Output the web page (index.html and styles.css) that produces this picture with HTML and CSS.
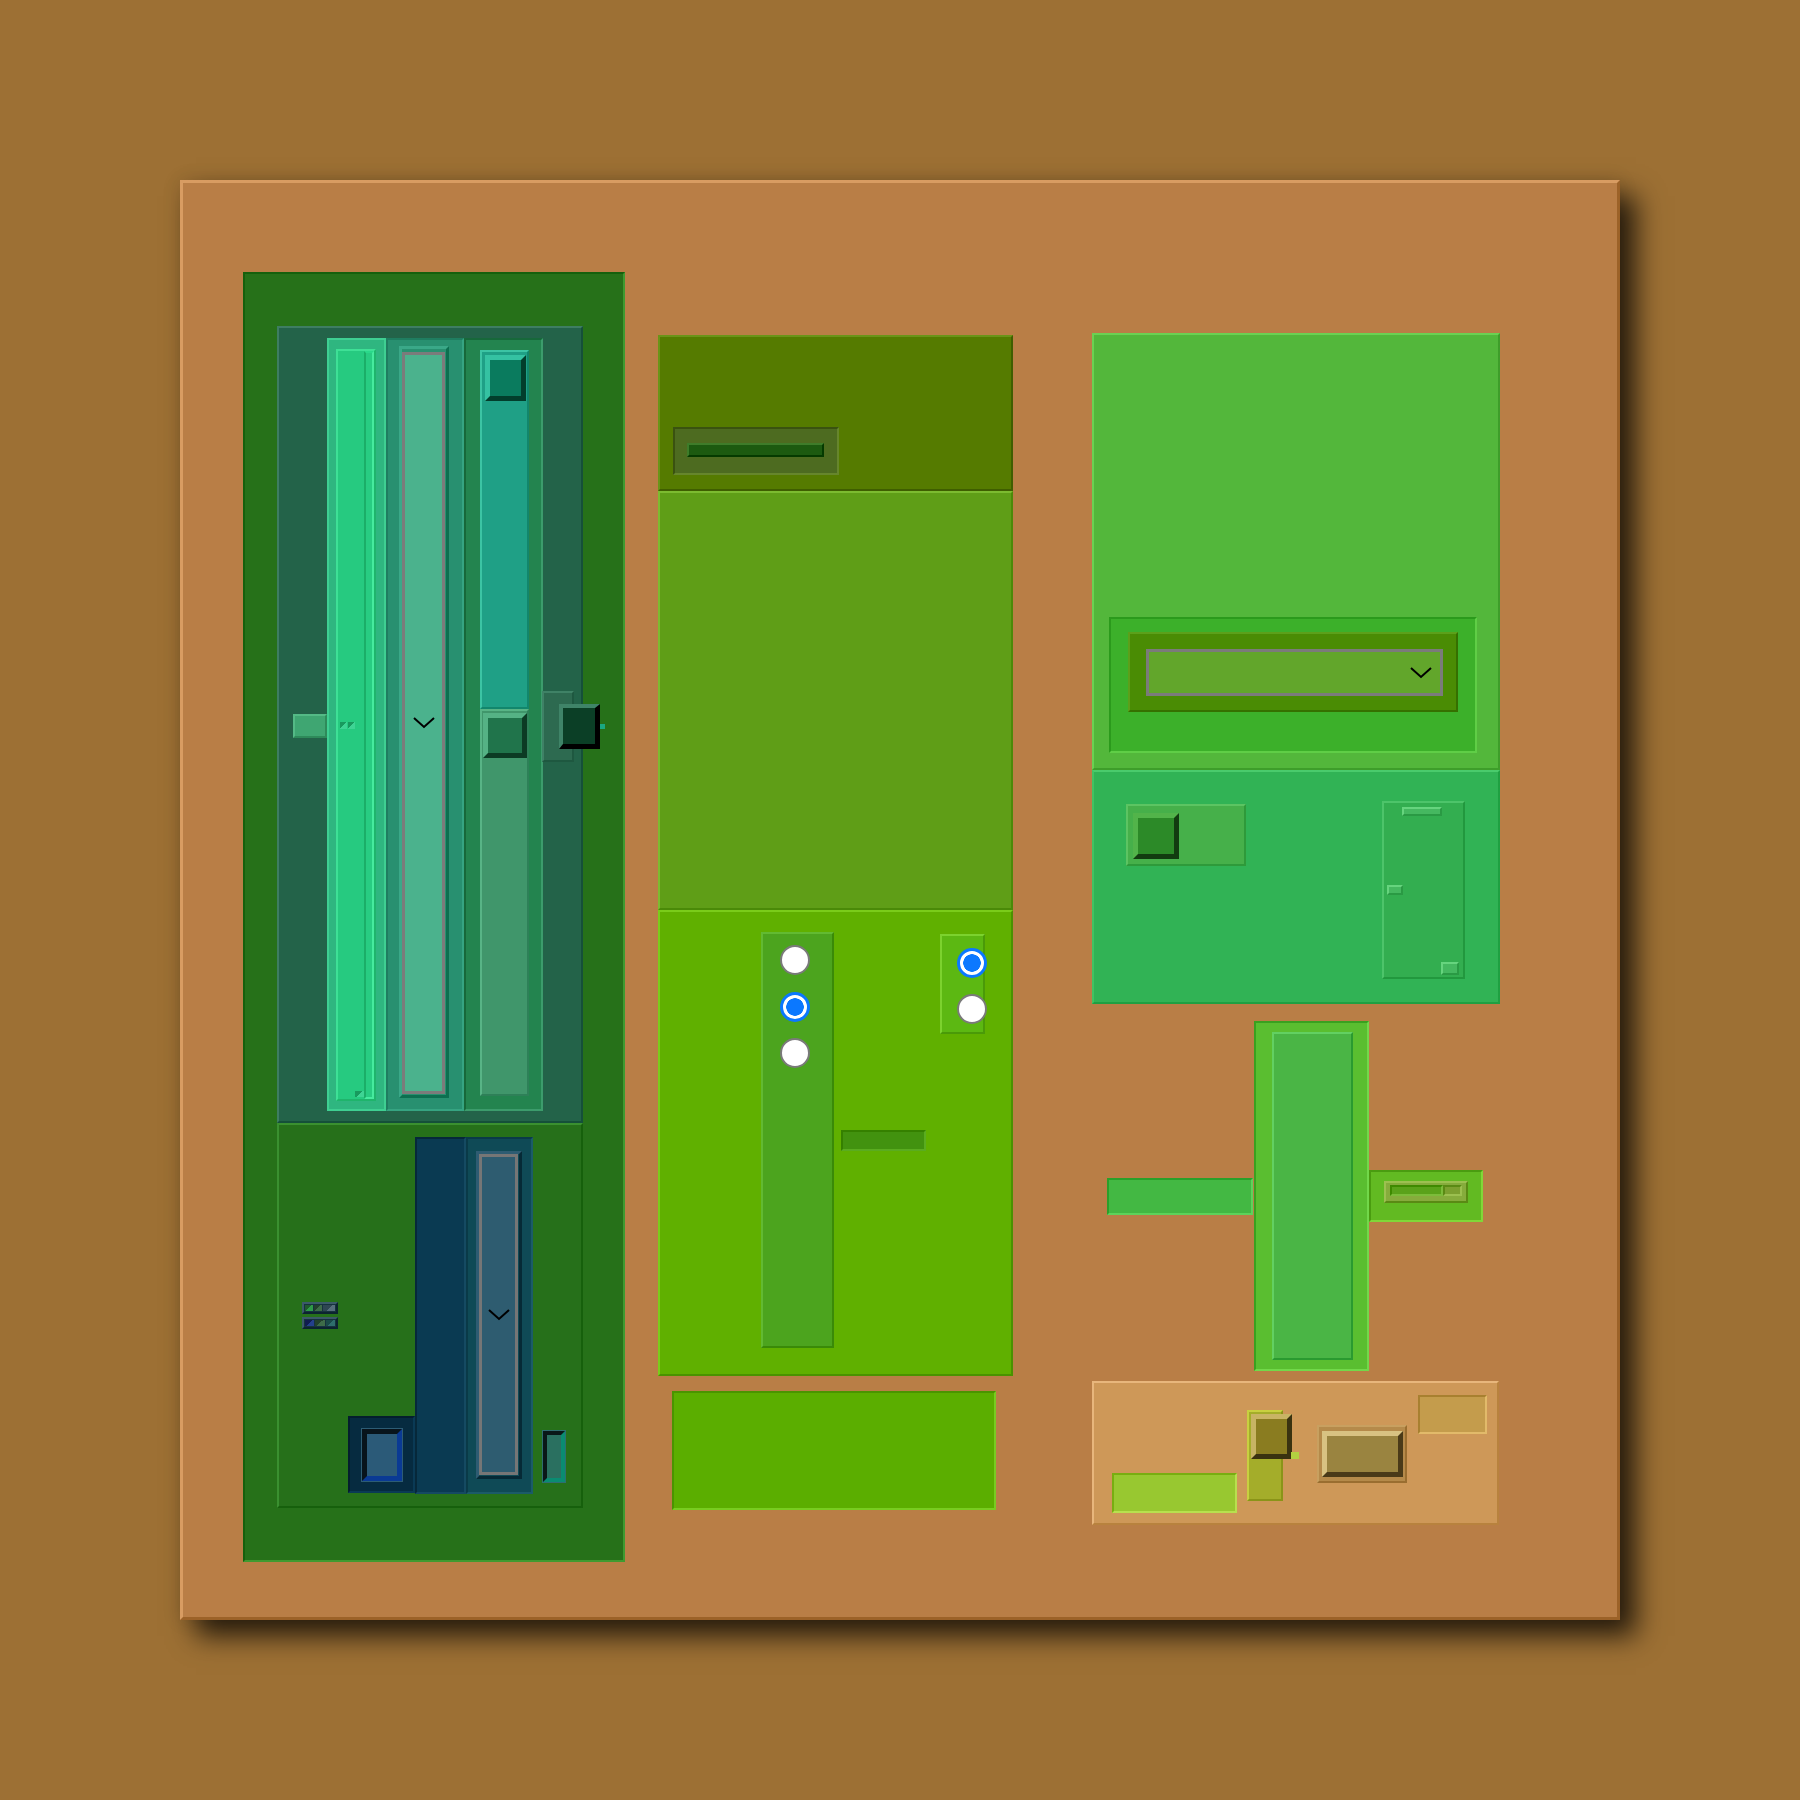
FILE: index.html
```html
<!DOCTYPE html>
<html>
<head>
<meta charset="utf-8">
<link rel="stylesheet" href="styles.css">
</head>
<body>
<div class="board">
  <div class="colA">
    <div class="teal">
      <div class="a-small"></div>
      <div class="c1">
        <div class="c1-inner">
          <div class="lane">
            <div class="lane-top"></div>
            <div class="ticks"><span class="tk1"></span><span class="tk1"></span></div>
            <div class="lane-bot"><span class="tk1 tk-end"></span></div>
          </div>
          <div class="strip"></div>
        </div>
      </div>
      <div class="c2">
        <div class="sel-out">
          <div class="sel-in">
            <svg class="chev" width="22" height="12" viewBox="0 0 22 12"><polyline points="1,1 11,10 21,1" fill="none" stroke="#000" stroke-width="2"/></svg>
          </div>
        </div>
      </div>
      <div class="c3">
        <div class="track">
          <div class="t-up"><div class="thumb1"></div></div>
          <div class="t-low"><div class="thumb2"></div></div>
        </div>
      </div>
      <div class="a-right">
        <div class="a-btn"></div>
        <div class="a-dot"></div>
      </div>
    </div>
    <div class="gpanel">
      <div class="tickbox">
        <div class="tk"><span class="sg sg-g"></span><span class="sg sg-o"></span><span class="sg sg-w sg-b"></span></div>
        <div class="tk"><span class="sg sg-n"></span><span class="sg sg-o"></span><span class="sg sg-t"></span></div>
      </div>
      <div class="sq"><div class="sq-btn"><div class="sq-bev"></div></div></div>
      <div class="navy"></div>
      <div class="ncol">
        <div class="nsel-out">
          <div class="nsel-in">
            <svg class="chev" width="22" height="12" viewBox="0 0 22 12"><polyline points="1,1 11,10 21,1" fill="none" stroke="#000" stroke-width="2"/></svg>
          </div>
        </div>
      </div>
      <div class="nsmall"><div class="nsmall-bev"></div></div>
    </div>
  </div>

  <div class="colB">
    <div class="b1">
      <div class="b1-box"><div class="b1-bar"></div></div>
    </div>
    <div class="b2"></div>
    <div class="b3">
      <div class="b3-radios">
        <input class="radio" type="radio" name="r1">
        <input class="radio" type="radio" name="r1" checked>
        <input class="radio" type="radio" name="r1">
      </div>
      <div class="b3-bar"></div>
      <div class="b3-box">
        <input class="radio" type="radio" name="r2" checked>
        <input class="radio" type="radio" name="r2">
      </div>
    </div>
    <div class="b4"></div>
  </div>

  <div class="colC">
    <div class="c-top">
      <div class="ct-in">
        <div class="ct-dark">
          <div class="ct-sel">
            <svg class="chev" width="22" height="12" viewBox="0 0 22 12"><polyline points="1,1 11,10 21,1" fill="none" stroke="#000" stroke-width="2"/></svg>
          </div>
        </div>
      </div>
    </div>
    <div class="c-low">
      <div class="toggle"><div class="knob"></div></div>
      <div class="lowbox">
        <div class="lb lb1"></div>
        <div class="lb lb2"></div>
        <div class="lb lb3"></div>
      </div>
    </div>
    <div class="c-mid">
      <div class="c-lbar"></div>
      <div class="c-tall"><div class="c-tall-in"></div></div>
      <div class="c-rbox">
        <div class="c-rbar"><div class="rt1"></div><div class="rt2"></div></div>
      </div>
    </div>
    <div class="c-tan">
      <div class="lime"></div>
      <div class="olive">
        <div class="olive-btn"></div>
        <div class="olive-tip"></div>
      </div>
      <div class="brown"><div class="brown-btn"></div></div>
      <div class="tanbox"></div>
    </div>
  </div>
</div>
</body>
</html>
```

FILE: styles.css
```css
* { box-sizing: border-box; margin: 0; padding: 0; }
html, body { width: 1800px; height: 1800px; }
body {
  background: #9d7034;
  font-family: "Liberation Sans", sans-serif;
  padding: 180px;
  overflow: hidden;
}
.board {
  width: 1440px;
  height: 1440px;
  background: #b97e46;
  border: 3px solid;
  border-color: #d89c62 #9c6228 #9c6228 #d89c62;
  box-shadow: 16px 16px 26px rgba(0, 0, 0, 0.75), 0 0 18px rgba(0, 0, 0, 0.12);
  display: flex;
  align-items: flex-start;
  padding-left: 60px;
}
.chev { display: block; }

/* ---------- Column A ---------- */
.colA {
  width: 382px;
  height: 1290px;
  margin-top: 89px;
  background: #267119;
  border: 2px solid;
  border-color: #15600c #3f9a30 #3f9a30 #15600c;
  padding: 52px 0 0 32px;
  flex-shrink: 0;
}
.teal {
  width: 306px;
  height: 797px;
  background: #236349;
  border: 2px solid;
  border-color: #3e7d62 #15503a #15503a #3e7d62;
  display: flex;
  align-items: center;
  padding-left: 14px;
}
.a-small {
  width: 34px;
  height: 24px;
  margin-top: 3px;
  background: #3fa672;
  border: 2px solid;
  border-color: #54ba86 #2e8a5a #2e8a5a #54ba86;
  flex-shrink: 0;
}
.c1 {
  width: 59px;
  height: 773px;
  background: #2fb680;
  border: 2px solid #3fcf92;
  padding: 9px 0 0 7px;
  flex-shrink: 0;
}
.c1-inner {
  width: 40px;
  height: 752px;
  background: #26ca80;
  border: 2px solid;
  border-color: #3ee096 #1fb46c #1fb46c #3ee096;
  display: flex;
}
.lane {
  flex: 1;
  display: grid;
  grid-template-rows: 1fr auto 1fr;
}
.ticks { display: flex; gap: 1px; margin-left: 2px; }
.tk1 {
  display: block;
  width: 7px;
  height: 7px;
  background: linear-gradient(135deg, #189a5e 50%, #3ed494 50%);
}
.lane-bot { display: flex; align-items: flex-end; justify-content: flex-end; padding-bottom: 2px; }
.tk-end { width: 9px; height: 6px; }
.strip {
  width: 10px;
  background: #28cc82;
  border: 2px solid;
  border-color: #2ad88a #46ea9e #46ea9e #1bae68;
}
.c2 {
  width: 78px;
  height: 773px;
  background: #289070;
  border: 2px solid;
  border-color: #1f7d60 #36a482 #36a482 #1f7d60;
  padding: 6px 0 0 11px;
  flex-shrink: 0;
}
.sel-out {
  width: 50px;
  height: 752px;
  border: 3px solid;
  border-color: #3aa888 #0c6f50 #0c6f50 #3aa888;
  padding-top: 3px;
}
.sel-in {
  width: 43px;
  height: 742px;
  border: 3px solid #7b7b7b;
  background: #4bb28d;
  display: flex;
  align-items: center;
  justify-content: center;
}
.c3 {
  width: 79px;
  height: 773px;
  background: #23844f;
  border: 2px solid;
  border-color: #17683a #3c9c6c #3c9c6c #17683a;
  padding: 10px 0 0 14px;
  flex-shrink: 0;
}
.track {
  width: 49px;
  height: 746px;
  display: flex;
  flex-direction: column;
}
.t-up {
  height: 359px;
  background: #1fa086;
  border: 2px solid;
  border-color: #3cc4a4 #12866c #12866c #3cc4a4;
  padding: 3px 0 0 3px;
}
.thumb1 {
  width: 41px;
  height: 46px;
  background: #0a7b5e;
  border: 5px solid;
  border-color: #35c2a2 #023e2c #023e2c #35c2a2;
}
.t-low {
  flex: 1;
  background: #40966b;
  border: 2px solid;
  border-color: #58b486 #2e8058 #2e8058 #58b486;
  padding: 2px 0 0 1px;
}
.thumb2 {
  width: 44px;
  height: 45px;
  background: #20744b;
  border: 5px solid;
  border-color: #55b285 #0c3b24 #0c3b24 #55b285;
}
.a-right {
  width: 32px;
  height: 71px;
  margin: 4px 0 0 -1px;
  background: #2d6a50;
  border: 2px solid;
  border-color: #3f8266 #1e5840 #1e5840 #3f8266;
  position: relative;
  flex-shrink: 0;
}
.a-btn {
  position: absolute;
  left: 15px;
  top: 11px;
  width: 41px;
  height: 45px;
  background: #0b3f26;
  border-style: solid;
  border-width: 4px 5px 5px 4px;
  border-color: #3f8468 #000 #000 #3f8468;
}
.a-dot {
  position: absolute;
  left: 56px;
  top: 31px;
  width: 5px;
  height: 5px;
  background: #1aa882;
}

.gpanel {
  width: 306px;
  height: 385px;
  background: #26701a;
  border: 2px solid;
  border-color: #3a9030 #16600c #16600c #3a9030;
  display: flex;
  align-items: center;
  padding-left: 23px;
}
.tickbox { display: flex; flex-direction: column; gap: 3px; width: 36px; flex-shrink: 0; }
.tk {
  height: 12px;
  background: #16323e;
  border: 2px solid;
  border-color: #3b5a68 #0c2430 #0c2430 #3b5a68;
  display: flex;
  gap: 1px;
  padding: 1px;
}
.sg { display: block; flex: 1; }
.sg-w { flex: 1.6; }
.sg-g { background: linear-gradient(135deg, #1f5a2c 50%, #2e9a48 50%); }
.sg-o { background: linear-gradient(135deg, #22402c 50%, #3e6c48 50%); }
.sg-b { background: linear-gradient(135deg, #2e4652 50%, #566e7c 50%); }
.sg-n { background: linear-gradient(135deg, #101c50 50%, #24408c 50%); }
.sg-t { background: linear-gradient(135deg, #1a4a48 50%, #2e6e6c 50%); }
.sq {
  align-self: flex-end;
  margin: 0 0 13px 10px;
  width: 67px;
  height: 77px;
  background: #062b40;
  border: 2px solid;
  border-color: #041e2e #0a3a55 #0a3a55 #041e2e;
  display: flex;
  align-items: center;
  justify-content: center;
  flex-shrink: 0;
}
.sq-btn {
  width: 42px;
  height: 54px;
  border: 1px solid #2d5c74;
}
.sq-bev {
  width: 100%;
  height: 100%;
  background: #2b5a78;
  border: 5px solid;
  border-color: #08141c #0a3a94 #0a3a94 #08141c;
}
.navy {
  width: 51px;
  height: 357px;
  background: #0a3a52;
  border: 2px solid;
  border-color: #06283a #154a62 #154a62 #06283a;
  flex-shrink: 0;
}
.ncol {
  width: 67px;
  height: 357px;
  background: #0f4a56;
  border: 2px solid;
  border-color: #0a3a48 #1b5b68 #1b5b68 #0a3a48;
  padding: 12px 0 0 8px;
  flex-shrink: 0;
}
.nsel-out {
  width: 46px;
  height: 328px;
  border: 3px solid;
  border-color: #2e5c72 #062a36 #062a36 #2e5c72;
}
.nsel-in {
  width: 39px;
  height: 321px;
  border: 3px solid #767676;
  background: #2e5c70;
  display: flex;
  align-items: center;
  justify-content: center;
}
.nsmall {
  align-self: flex-end;
  margin: 0 0 23px 9px;
  width: 24px;
  height: 53px;
  border: 1px solid #2e6e70;
  flex-shrink: 0;
}
.nsmall-bev {
  width: 100%;
  height: 100%;
  background: #2a7060;
  border: 4px solid;
  border-color: #0a1818 #0a8c72 #0a8c72 #0a1818;
}

/* ---------- Column B ---------- */
.colB {
  width: 355px;
  margin: 152px 0 0 33px;
  display: flex;
  flex-direction: column;
  flex-shrink: 0;
}
.b1 {
  height: 156px;
  background: #557b00;
  border: 2px solid;
  border-color: #6a9418 #3f5e00 #3f5e00 #6a9418;
  padding: 90px 0 0 13px;
}
.b1-box {
  width: 166px;
  height: 48px;
  background: #4d6b20;
  border: 2px solid;
  border-color: #3a5210 #66862c #66862c #3a5210;
  padding: 14px 0 0 12px;
}
.b1-bar {
  width: 137px;
  height: 14px;
  background: #1c5a10;
  border: 2px solid;
  border-color: #3e7c2a #053a00 #053a00 #3e7c2a;
}
.b2 {
  height: 419px;
  background: #5f9e17;
  border: 2px solid;
  border-color: #7cbb30 #4a8a08 #4a8a08 #7cbb30;
}
.b3 {
  height: 466px;
  background: #60b000;
  border: 2px solid;
  border-color: #7acc1a #4a9200 #4a9200 #7acc1a;
  display: flex;
  align-items: flex-start;
  padding-left: 101px;
}
.b3-radios {
  margin-top: 20px;
  width: 73px;
  height: 416px;
  background: #4ca41e;
  border: 2px solid;
  border-color: #62ba32 #3a8a08 #3a8a08 #62ba32;
  display: flex;
  flex-direction: column;
  align-items: center;
  padding: 11px 5px 0 0;
  gap: 16.5px;
  flex-shrink: 0;
}
.b3-bar {
  margin: 218px 0 0 7px;
  width: 85px;
  height: 21px;
  background: #42920f;
  border: 2px solid;
  border-color: #358000 #5aac20 #5aac20 #358000;
  flex-shrink: 0;
}
.b3-box {
  margin: 22px 0 0 14px;
  width: 45px;
  height: 100px;
  background: #5cb812;
  border: 2px solid;
  border-color: #7cd22e #4a9a08 #4a9a08 #7cd22e;
  padding: 11.5px 0 0 15px;
  display: flex;
  flex-direction: column;
  gap: 16.5px;
  flex-shrink: 0;
}
.radio {
  appearance: none;
  -webkit-appearance: none;
  display: block;
  width: 30px;
  height: 30px;
  border-radius: 50%;
  background: #fff;
  border: 2px solid #7a7a7a;
  flex-shrink: 0;
  margin: 0;
}
.radio:checked {
  border: 3px solid #0b78ff;
  background: radial-gradient(circle, #0b78ff 0, #0b78ff 8.5px, #fff 9px);
}
.b4 {
  margin: 15px 0 0 14px;
  width: 324px;
  height: 119px;
  background: #5bae00;
  border: 2px solid;
  border-color: #4a9400 #78cc20 #78cc20 #4a9400;
}

/* ---------- Column C ---------- */
.colC {
  width: 408px;
  margin: 150px 0 0 79px;
  display: flex;
  flex-direction: column;
  flex-shrink: 0;
}
.c-top {
  height: 437px;
  background: #53b73b;
  border: 2px solid;
  border-color: #6ad152 #3e9e2a #3e9e2a #6ad152;
  padding: 282px 0 0 15px;
}
.ct-in {
  width: 368px;
  height: 136px;
  background: #3cb02a;
  border: 2px solid;
  border-color: #2b9a1c #5fce46 #5fce46 #2b9a1c;
  padding: 13px 0 0 17px;
}
.ct-dark {
  width: 330px;
  height: 80px;
  background: #4a8c04;
  border: 2px solid;
  border-color: #5ca01a #357000 #357000 #5ca01a;
  padding: 15px 0 0 16px;
}
.ct-sel {
  width: 297px;
  height: 47px;
  border: 3px solid #7b7b7b;
  background: #62a62b;
  display: flex;
  align-items: center;
  justify-content: flex-end;
  padding-right: 8px;
}
.c-low {
  height: 234px;
  background: #31b355;
  border: 2px solid;
  border-color: #4acb6c #1fa042 #1fa042 #42c262;
  display: flex;
  align-items: flex-start;
  padding-left: 32px;
}
.toggle {
  margin-top: 32px;
  width: 120px;
  height: 62px;
  background: #46b04a;
  border: 2px solid;
  border-color: #5cc462 #2e9a3a #2e9a3a #5cc462;
  padding: 7px 0 0 5px;
  flex-shrink: 0;
}
.knob {
  width: 46px;
  height: 46px;
  background: #2c8a28;
  border: 5px solid;
  border-color: #52b44a #123c10 #123c10 #52b44a;
}
.lowbox {
  margin: 29px 0 0 136px;
  width: 83px;
  height: 178px;
  background: #33ae50;
  border: 2px solid;
  border-color: #4dc46a #22983e #22983e #4dc46a;
  display: flex;
  flex-direction: column;
  align-items: flex-start;
  flex-shrink: 0;
}
.lb {
  background: #45b860;
  border: 2px solid;
  border-color: #66d47e #2a9a44 #2a9a44 #66d47e;
}
.lb1 { width: 40px; height: 9px; margin: 4px 0 0 18px; }
.lb2 { width: 16px; height: 10px; margin: 69px 0 0 3px; }
.lb3 { width: 18px; height: 13px; margin: 67px 0 0 57px; }
.c-mid {
  display: flex;
  align-items: center;
  margin-top: 17px;
  padding-left: 15px;
}
.c-lbar {
  width: 146px;
  height: 37px;
  margin-right: 1px;
  background: #43b843;
  border: 2px solid;
  border-color: #2aa02a #5ed25a #5ed25a #2aa02a;
  flex-shrink: 0;
}
.c-tall {
  width: 115px;
  height: 350px;
  background: #5abe30;
  border: 2px solid;
  border-color: #3aa020 #72d84a #72d84a #3aa020;
  padding: 9px 0 0 16px;
  flex-shrink: 0;
}
.c-tall-in {
  width: 81px;
  height: 328px;
  background: #4ab545;
  border: 2px solid;
  border-color: #62d062 #2a9a30 #2a9a30 #62d062;
}
.c-rbox {
  width: 114px;
  height: 52px;
  background: #62ba22;
  border: 2px solid;
  border-color: #4a9c10 #80d838 #80d838 #4a9c10;
  padding: 9px 0 0 13px;
  flex-shrink: 0;
}
.c-rbar {
  width: 84px;
  height: 22px;
  background: #86ac3c;
  border: 2px solid;
  border-color: #9cc050 #5a8a14 #5a8a14 #9cc050;
  display: flex;
  align-items: flex-start;
  padding: 2px 0 0 4px;
}
.rt1 {
  width: 53px;
  height: 11px;
  background: #5aa21a;
  border: 2px solid;
  border-color: #3e8a00 #7cbc3a #7cbc3a #3e8a00;
}
.rt2 {
  width: 19px;
  height: 11px;
  background: #7ca030;
  border: 2px solid;
  border-color: #5a8a14 #9cc050 #9cc050 #5a8a14;
}
.c-tan {
  margin-top: 10px;
  width: 407px;
  height: 144px;
  background: #ce9858;
  border: 2px solid;
  border-color: #e8b67c #b8823e #b8823e #e8b67c;
  display: flex;
  align-items: flex-start;
  padding-left: 18px;
}
.lime {
  margin-top: 90px;
  width: 125px;
  height: 40px;
  background: #98c830;
  border: 2px solid;
  border-color: #78ae10 #b8e04e #b8e04e #78ae10;
  flex-shrink: 0;
}
.olive {
  margin: 27px 0 0 10px;
  width: 36px;
  height: 91px;
  background: #a4ad2a;
  border: 2px solid;
  border-color: #c8d040 #8a9418 #8a9418 #c8d040;
  position: relative;
  flex-shrink: 0;
}
.olive-btn {
  position: absolute;
  left: 2px;
  top: 2px;
  width: 41px;
  height: 45px;
  background: #8a7c20;
  border: 5px solid;
  border-color: #c8b464 #3a3210 #3a3210 #c8b464;
}
.olive-tip {
  position: absolute;
  left: 42px;
  top: 40px;
  width: 8px;
  height: 7px;
  background: #b2d040;
}
.brown {
  margin: 42px 0 0 34px;
  width: 90px;
  height: 58px;
  background: #b58a4a;
  border: 2px solid;
  border-color: #c8a060 #9a6e30 #9a6e30 #c8a060;
  padding: 4px 0 0 3px;
  flex-shrink: 0;
}
.brown-btn {
  width: 81px;
  height: 46px;
  background: #9a8440;
  border: 5px solid;
  border-color: #d8c282 #4a3a18 #4a3a18 #d8c282;
}
.tanbox {
  margin: 12px 0 0 11px;
  width: 69px;
  height: 39px;
  background: #c49c4c;
  border: 2px solid;
  border-color: #a88030 #e2ba6a #e2ba6a #a88030;
  flex-shrink: 0;
}
```
